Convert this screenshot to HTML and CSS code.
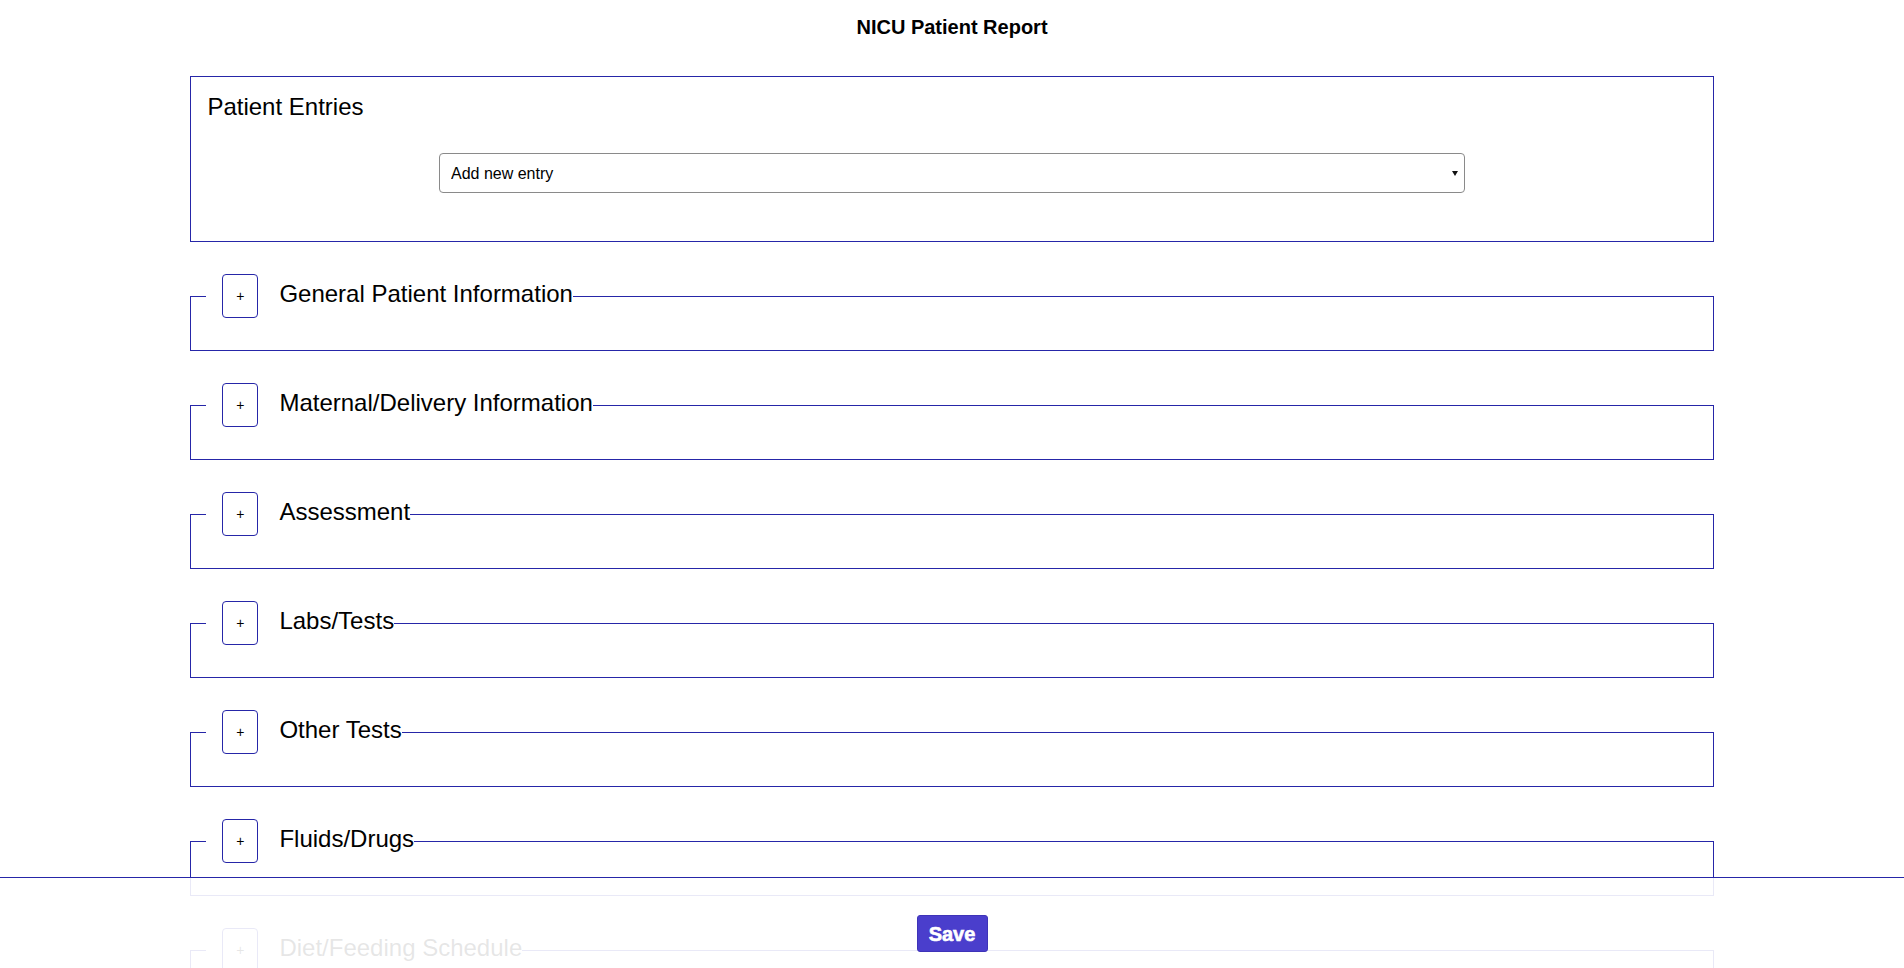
FILE: index.html
```html
<!DOCTYPE html>
<html lang="en">
<head>
<meta charset="utf-8">
<title>NICU Patient Report</title>
<link rel="stylesheet" href="styles.css">
</head>
<body>
<h1 class="page-title">NICU Patient Report</h1>
<main class="container">
  <section class="entries">
    <h2 class="entries-title">Patient Entries</h2>
    <div class="select-wrap">
      <select class="entry-select">
        <option>Add new entry</option>
      </select>
    </div>
  </section>

  <fieldset class="section">
    <legend class="section-legend"><span class="legend-row"><button class="toggle" type="button">+</button><span class="section-title">General Patient Information</span></span></legend>
  </fieldset>
  <fieldset class="section">
    <legend class="section-legend"><span class="legend-row"><button class="toggle" type="button">+</button><span class="section-title">Maternal/Delivery Information</span></span></legend>
  </fieldset>
  <fieldset class="section">
    <legend class="section-legend"><span class="legend-row"><button class="toggle" type="button">+</button><span class="section-title">Assessment</span></span></legend>
  </fieldset>
  <fieldset class="section">
    <legend class="section-legend"><span class="legend-row"><button class="toggle" type="button">+</button><span class="section-title">Labs/Tests</span></span></legend>
  </fieldset>
  <fieldset class="section">
    <legend class="section-legend"><span class="legend-row"><button class="toggle" type="button">+</button><span class="section-title">Other Tests</span></span></legend>
  </fieldset>
  <fieldset class="section">
    <legend class="section-legend"><span class="legend-row"><button class="toggle" type="button">+</button><span class="section-title">Fluids/Drugs</span></span></legend>
  </fieldset>
  <fieldset class="section">
    <legend class="section-legend"><span class="legend-row"><button class="toggle" type="button">+</button><span class="section-title">Diet/Feeding Schedule</span></span></legend>
  </fieldset>
  <div class="bottom-spacer"></div>
</main>
<footer class="footer">
  <button class="save" type="button">Save</button>
</footer>
</body>
</html>
```

FILE: styles.css
```css
html, body {
  margin: 0;
  padding: 0;
  background: #ffffff;
}

body {
  font-family: "Liberation Sans", Arial, sans-serif;
  color: #000000;
}

.page-title {
  margin: 0;
  padding-top: 16px;
  font-size: 20px;
  line-height: 23px;
  font-weight: 700;
  text-align: center;
}

.container {
  width: 80%;
  margin: 37px auto 0;
}

.entries {
  border: 1px solid #2626a8;
  padding: 16px 16px 48px;
}

.entries-title {
  margin: 0;
  font-size: 24px;
  line-height: 27px;
  font-weight: 400;
}

.select-wrap {
  position: relative;
  width: 1026px;
  margin: 33px auto 0;
}

.select-wrap::after {
  content: "";
  position: absolute;
  right: 7px;
  top: 18px;
  border-left: 3px solid transparent;
  border-right: 3px solid transparent;
  border-top: 5px solid #111111;
  pointer-events: none;
}

.entry-select {
  display: block;
  width: 100%;
  height: 40px;
  box-sizing: border-box;
  appearance: none;
  -webkit-appearance: none;
  background: #ffffff;
  border: 1px solid #8a8a8a;
  border-radius: 4px;
  padding: 0 24px 0 11px;
  font-family: "Liberation Sans", Arial, sans-serif;
  font-size: 16px;
  color: #000000;
}

.section {
  margin: 32px 0 0;
  padding: 0 15px 32px;
  border: 1px solid #2626a8;
  min-inline-size: 0;
}

.section-legend {
  padding: 0 0 0 16px;
  margin: 0;
}

.legend-row {
  display: flex;
  align-items: center;
  height: 44px;
}

.toggle {
  width: 36px;
  height: 44px;
  box-sizing: border-box;
  border: 1px solid #2626a8;
  border-radius: 4px;
  background: #ffffff;
  padding: 0;
  font-family: "Liberation Sans", Arial, sans-serif;
  font-size: 14px;
  line-height: 1;
  color: #000000;
}

.section-title {
  margin-left: 21px;
  margin-bottom: 6px;
  font-size: 24px;
  line-height: 27px;
}

.bottom-spacer {
  height: 120px;
}

.footer {
  position: fixed;
  left: 0;
  right: 0;
  bottom: 0;
  height: 90px;
  border-top: 1px solid #2626a8;
  background: rgba(255, 255, 255, 0.9);
  display: flex;
  justify-content: center;
  align-items: flex-start;
}

.save {
  margin-top: 37px;
  width: 71px;
  height: 37px;
  box-sizing: border-box;
  background: #4a3ecc;
  border: 1px solid #3e33b8;
  border-radius: 3px;
  color: #ffffff;
  font-family: "Liberation Sans", Arial, sans-serif;
  font-size: 20px;
  font-weight: 700;
  -webkit-text-stroke: 0.6px #ffffff;
  padding: 0;
  line-height: 1;
}
```
